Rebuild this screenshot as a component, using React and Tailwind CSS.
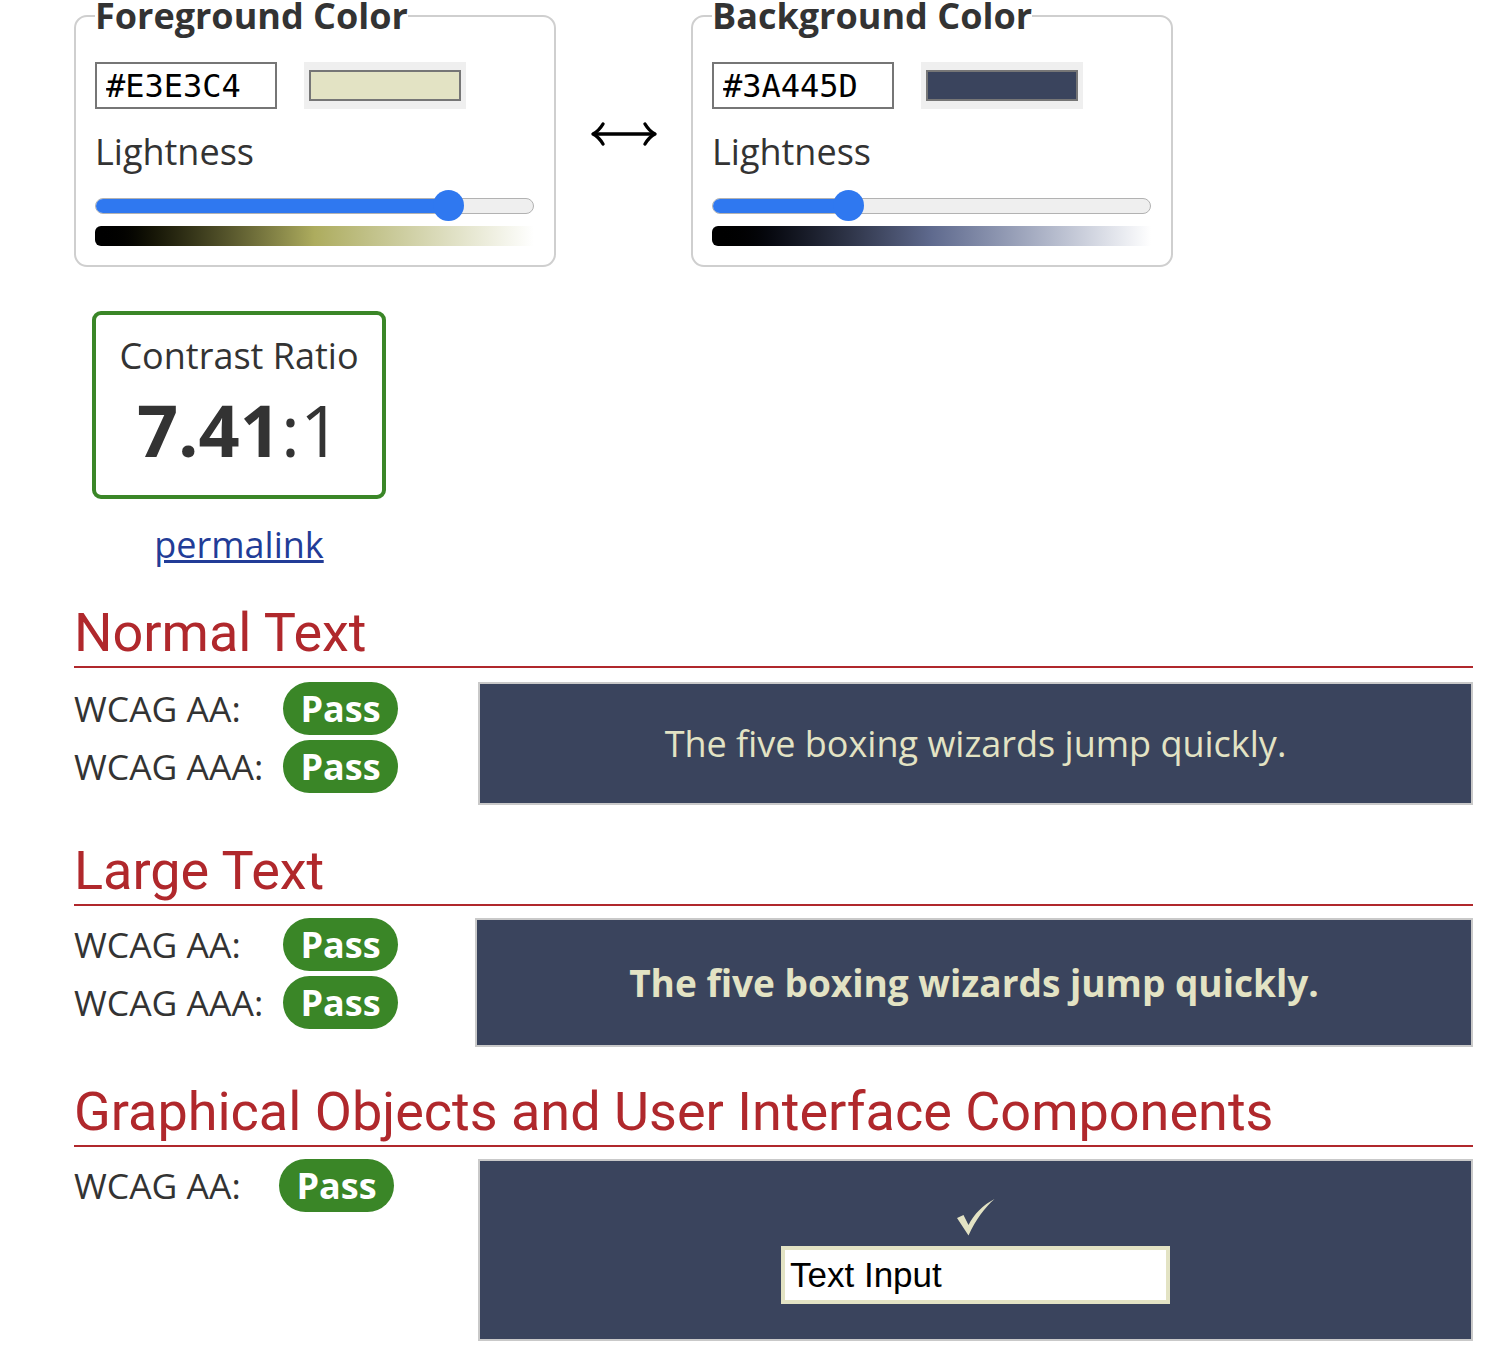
import React from 'react'

const FG = '#E3E3C4'
const BG = '#3A445D'

// HSL lightness of a hex colour, 0..1
const lightness = (hex) => {
  const n = hex.replace('#', '')
  const c = [0, 2, 4].map((i) => parseInt(n.slice(i, i + 2), 16) / 255)
  return (Math.max(...c) + Math.min(...c)) / 2
}

const Arrow = () => (
  <svg width="68" height="28" viewBox="0 0 68 28" fill="none" stroke="#000" strokeWidth="3.4" strokeLinecap="round" strokeLinejoin="round">
    <path d="M4 14 H64" />
    <path d="M13 4 C10 9 7 12 3 14 C7 16 10 19 13 24" />
    <path d="M55 4 C58 9 61 12 65 14 C61 16 58 19 55 24" />
  </svg>
)

const Check = () => (
  <svg width="38" height="37" viewBox="0 0 38 37" fill={FG}>
    <path d="M0 19 L6.5 16 L11.5 26 C17 15 26 6 37.5 0 C28 8.5 19 20 11.5 36.5 Z" />
  </svg>
)

const Slider = ({ value }) => (
  <div className="relative h-[32px] flex items-center">
    <div className="relative w-full h-[16px] rounded-full bg-[#efefef] border border-[#b2b2b2] overflow-hidden">
      <div
        className="absolute left-0 top-0 bottom-0 bg-[#2f78f0]"
        style={{ width: `calc((100% - 31px) * ${value} + 15px)` }}
      />
    </div>
    <div
      className="absolute top-0 w-[31px] h-[31px] rounded-full bg-[#2f78f0]"
      style={{ left: `calc((100% - 31px) * ${value})` }}
    />
  </div>
)

const ColorPicker = ({ title, hex, gradient }) => (
  <fieldset className="w-[482px] border-2 border-[#cfcfcf] rounded-[13px] px-[19px] pr-[20px] pt-[30px] pb-[19px]">
    <legend className="text-[36px] leading-[32px] font-bold text-[#333]">{title}</legend>
    <div className="flex items-center">
      <input
        readOnly
        value={hex}
        className="w-[182px] h-[47px] border-2 border-[#767676] pl-[9px] text-[32px] text-black outline-none [font-family:'DejaVu_Sans_Mono',monospace]"
      />
      <div className="ml-[27px] w-[162px] h-[47px] bg-[#efefef] px-[5px] py-[8px]">
        <div className="w-full h-full border-2 border-[#767676]" style={{ backgroundColor: hex }} />
      </div>
    </div>
    <div className="mt-[19px] text-[36px] leading-[48px] text-[#333]">Lightness</div>
    <div className="mt-[14px]">
      <Slider value={lightness(hex)} />
    </div>
    <div className={`mt-[4px] h-[20px] rounded-l-[6px] ${gradient}`} />
  </fieldset>
)

const Badge = () => (
  <div className="w-[115px] h-[53px] rounded-full bg-[#3a8627] flex items-center justify-center text-[36px] font-bold text-white leading-none">
    Pass
  </div>
)

const Row = ({ label, labelWidth }) => (
  <div className="flex items-center h-[53px]">
    <div className={`${labelWidth} text-[35.5px] leading-[53px] text-[#333]`}>{label}</div>
    <Badge />
  </div>
)

const Heading = ({ children, className }) => (
  <h2 className={`text-[54px] leading-[64px] pb-[1px] border-b-2 border-[#b0282c] text-[#b0282c] [font-family:Roboto,sans-serif] ${className}`}>
    {children}
  </h2>
)

export default function App() {
  return (
    <div className="w-[1500px] min-h-[1354px] bg-white pl-[74px] pr-[27px] text-[#333] [font-family:'Open_Sans',sans-serif]">
      {/* colour pickers */}
      <div className="flex items-start">
        <ColorPicker title="Foreground Color" hex={FG} gradient="bg-linear-to-r from-black via-[#adac5e] to-white" />
        <div className="w-[135px] flex justify-center pt-[120px]">
          <Arrow />
        </div>
        <ColorPicker title="Background Color" hex={BG} gradient="bg-linear-to-r from-black via-[#5f6a8e] to-white" />
      </div>

      {/* ratio */}
      <div className="ml-[18px] mt-[44px] w-[294px] flex flex-col items-center">
        <div className="w-full h-[188px] border-4 border-[#3a8627] rounded-[9px] flex flex-col items-center pt-[18px]">
          <div className="text-[36px] leading-[46px]">Contrast Ratio</div>
          <div className="mt-[10px] text-[72px] leading-[80px]">
            <span className="font-bold">7.41</span>:1
          </div>
        </div>
        <a href="#" className="mt-[23px] text-[36px] leading-[46px] text-[#223c97] underline">permalink</a>
      </div>

      {/* normal text */}
      <Heading className="mt-[33px]">Normal Text</Heading>
      <div className="mt-[14px] flex items-start">
        <div className="w-[404px] flex flex-col gap-[5px]">
          <Row label="WCAG AA:" labelWidth="w-[209px]" />
          <Row label="WCAG AAA:" labelWidth="w-[209px]" />
        </div>
        <div className="flex-1 h-[123px] border-2 border-[#c9c9c9] bg-[#3A445D] flex items-center justify-center text-[36px] text-[#E3E3C4]">
          The five boxing wizards jump quickly.
        </div>
      </div>

      {/* large text */}
      <Heading className="mt-[34px]">Large Text</Heading>
      <div className="mt-[12px] flex items-start">
        <div className="w-[401px] flex flex-col gap-[5px]">
          <Row label="WCAG AA:" labelWidth="w-[209px]" />
          <Row label="WCAG AAA:" labelWidth="w-[209px]" />
        </div>
        <div className="flex-1 h-[129px] border-2 border-[#c9c9c9] bg-[#3A445D] flex items-center justify-center text-[37px] font-bold text-[#E3E3C4]">
          The five boxing wizards jump quickly.
        </div>
      </div>

      {/* graphical objects */}
      <Heading className="mt-[33px]">Graphical Objects and User Interface Components</Heading>
      <div className="mt-[12px] flex items-start">
        <div className="w-[404px]">
          <Row label="WCAG AA:" labelWidth="w-[205px]" />
        </div>
        <div className="flex-1 h-[182px] border-2 border-[#c9c9c9] bg-[#3A445D] flex flex-col items-center pt-[38px]">
          <Check />
          <input
            readOnly
            value="Text Input"
            className="mt-[10px] w-[389px] h-[58px] border-4 border-[#E3E3C4] bg-white pl-[5px] text-[35px] text-black outline-none [font-family:'Liberation_Sans',Arial,sans-serif]"
          />
        </div>
      </div>
    </div>
  )
}
